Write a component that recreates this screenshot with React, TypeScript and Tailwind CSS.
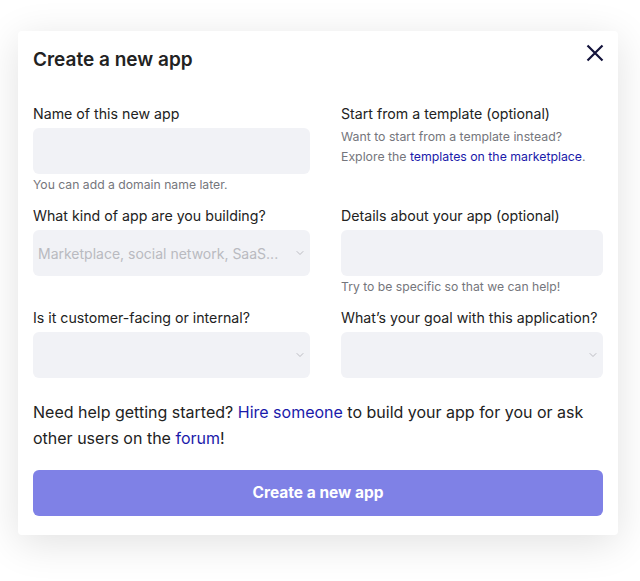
import { ChevronDown } from 'lucide-react'

const FONT = { fontFamily: 'Inter, "Noto Sans", sans-serif' }

function Label({ children }: { children: React.ReactNode }) {
  return <div className="h-5 pt-px text-[14.2px] leading-5 whitespace-nowrap text-[#222]">{children}</div>
}

function Field({ select, placeholder }: { select?: boolean; placeholder?: string }) {
  return (
    <div className="mt-[5px] flex h-[46px] items-center justify-between rounded-md bg-[#f1f2f6] pl-[5px] pr-[4px]">
      <span className="overflow-hidden text-[14px] whitespace-nowrap text-[#b9bac0]">{placeholder}</span>
      {select && <ChevronDown className="h-3 w-3 shrink-0 text-[#a9aab0]" strokeWidth={1.5} />}
    </div>
  )
}

function Help({ children }: { children: React.ReactNode }) {
  return <div className="mt-[3px] h-4 text-[12.2px] leading-4 text-[#75767c]">{children}</div>
}

export default function App() {
  return (
    <div className="min-h-screen bg-white pt-[31px] pl-[18px]" style={FONT}>
      <div className="relative w-[600px] rounded-sm bg-white px-[15px] pt-[17px] pb-[19px] shadow-[0_8px_40px_rgba(0,0,0,0.12)]">
        <button className="absolute top-[13px] right-[14px] text-[#14143c]">
          <svg width="18" height="18" viewBox="0 0 18 18" fill="none" stroke="currentColor" strokeWidth="2.2">
            <path d="M1.5 1.5 16.5 16.5M16.5 1.5 1.5 16.5" />
          </svg>
        </button>
        <h1 className="h-6 text-[19px] leading-6 font-semibold text-[#222]">Create a new app</h1>

        <div className="mt-[31px] grid grid-cols-[277px_262px] gap-x-[31px] gap-y-3">
          <div>
            <Label>Name of this new app</Label>
            <Field />
            <Help>You can add a domain name later.</Help>
          </div>
          <div>
            <Label>Start from a template (optional)</Label>
            <div className="mt-1 text-[12.3px] leading-5 text-[#75767c]">
              Want to start from a template instead?
              <br />
              Explore the <a className="text-[#1a1aaa]">templates on the marketplace</a>.
            </div>
          </div>

          <div>
            <Label>What kind of app are you building?</Label>
            <Field select placeholder="Marketplace, social network, SaaS..." />
          </div>
          <div>
            <Label>Details about your app (optional)</Label>
            <Field />
            <Help>Try to be specific so that we can help!</Help>
          </div>

          <div>
            <Label>Is it customer-facing or internal?</Label>
            <Field select />
          </div>
          <div>
            <Label>What&rsquo;s your goal with this application?</Label>
            <Field select />
          </div>
        </div>

        <p className="mt-[21px] text-[16px] leading-[26px] text-[#222]">
          Need help getting started? <a className="text-[#1a1aaa]">Hire someone</a> to build your app for you or ask
          other users on the <a className="text-[#1a1aaa]">forum</a>!
        </p>

        <button className="mt-[19px] flex h-[46px] w-full items-center justify-center rounded-md bg-[#7f81e6] text-[15.5px] font-bold text-white">
          Create a new app
        </button>
      </div>
    </div>
  )
}
